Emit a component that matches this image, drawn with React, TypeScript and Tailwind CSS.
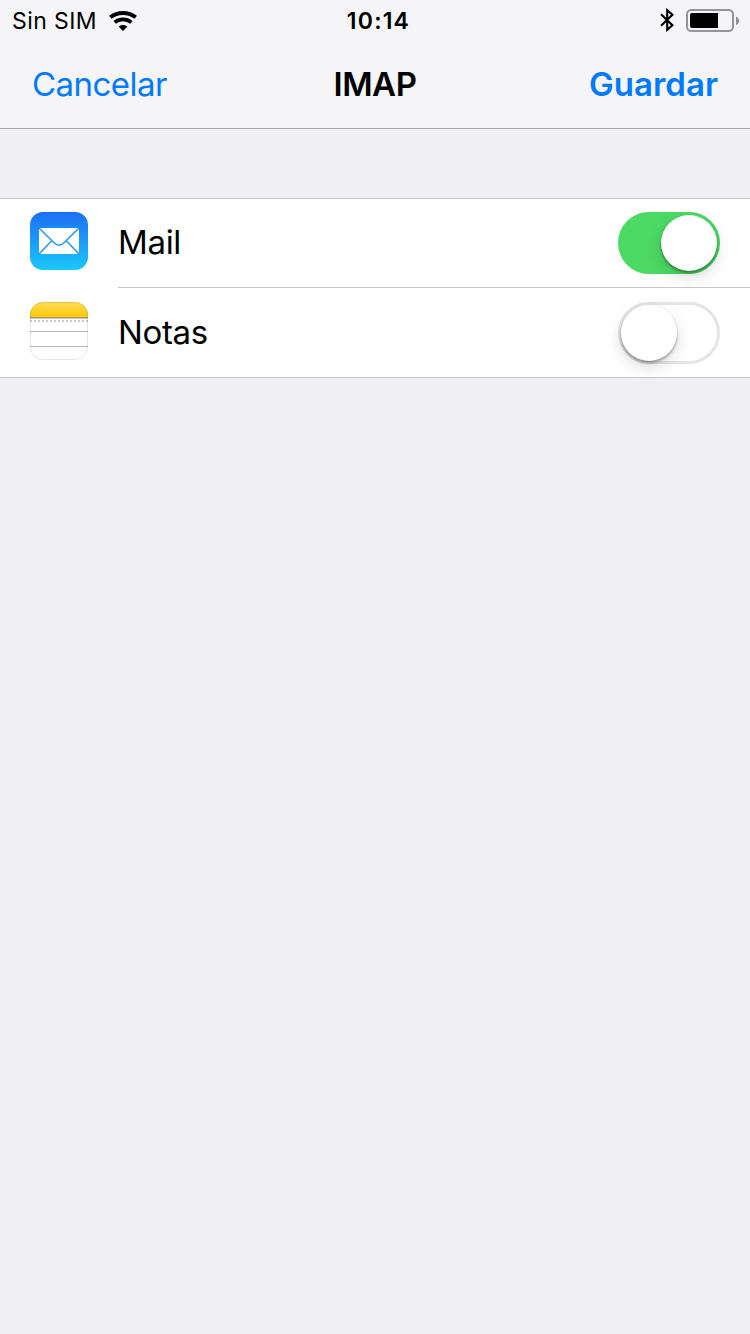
import { useState } from 'react';
import type { ReactNode } from 'react';
import clsx from 'clsx';

const WifiIcon = () => (
  <svg width="28" height="20" viewBox="0 0 28 20" fill="none">
    <path d="M1.300 6.300C8.400 .5 19.600 .5 26.700 6.300" stroke="#000" strokeWidth="3.900" />
    <path d="M5.700 11.300c4.700-4 11.900-4 16.600 0" stroke="#000" strokeWidth="3.700" />
    <path d="M9.600 15.600c2.400-2.200 6.400-2.200 8.800 0L14 20z" fill="#000" />
  </svg>
);

const BluetoothIcon = () => (
  <svg width="14" height="24" viewBox="0 0 14 24" fill="none" className="relative -top-px">
    <path d="M1 6.200l11.400 11L7.200 21.800V2.200l5.200 4.600L1 17.800" stroke="#000" strokeWidth="2.100" />
  </svg>
);

const BatteryIcon = () => (
  <svg width="54" height="24" viewBox="0 0 54 24" fill="none">
    <rect x="1" y="1" width="46" height="21" rx="4.200" stroke="#949496" strokeWidth="2" />
    <path d="M6 4h26v15H6a2 2 0 0 1-2-2V6a2 2 0 0 1 2-2z" fill="#000" />
    <path d="M50 7.500c4 1.500 4 7 0 8.500z" fill="#8e8e90" />
  </svg>
);

const MailIcon = () => (
  <svg width="58" height="58" viewBox="0 0 58 58" fill="none">
    <defs>
      <linearGradient id="mail" x1="0" y1="0" x2="0" y2="1">
        <stop offset="0" stopColor="#1d6ff2" />
        <stop offset="1" stopColor="#1ac8fc" />
      </linearGradient>
    </defs>
    <rect width="58" height="58" rx="13" fill="url(#mail)" />
    <rect x="9" y="16" width="40" height="26" fill="#fff" />
    <path d="M9 16l15.500 15.200c2.500 2.500 6.500 2.500 9 0L49 16M9 42l12.500-13M49 42L36.500 29" stroke="#2397f7" strokeWidth="1.500" />
  </svg>
);

const NotesIcon = () => (
  <svg width="58" height="58" viewBox="0 0 58 58" fill="none">
    <defs>
      <linearGradient id="notes" x1="0" y1="0" x2="0" y2="1">
        <stop offset="0" stopColor="#ffdc5a" />
        <stop offset="1" stopColor="#fdca05" />
      </linearGradient>
      <clipPath id="notesClip">
        <rect width="58" height="58" rx="13" />
      </clipPath>
    </defs>
    <g clipPath="url(#notesClip)">
      <rect width="58" height="58" fill="#fff" />
      <rect width="58" height="15" fill="url(#notes)" />
      <rect y="15" width="58" height="1" fill="#a99a69" />
      <rect y="16" width="58" height="1" fill="#c4c4c8" />
      <path d="M0 19h58" stroke="#c8c8c8" strokeWidth="2" strokeDasharray="2 2" />
      <path d="M0 29.500h58M0 44.500h58" stroke="#b9b9b9" />
    </g>
    <rect x=".5" y=".5" width="57" height="57" rx="12.500" stroke="#000" strokeOpacity=".1" />
  </svg>
);

type SwitchProps = {
  label: string;
  checked: boolean;
  onChange: () => void;
};

const Switch = ({ label, checked, onChange }: SwitchProps) => (
  <button
    role="switch"
    aria-label={label}
    aria-checked={checked}
    onClick={onChange}
    className={clsx(
      'flex h-[62px] w-[102px] items-center rounded-full border-[3px]',
      checked ? 'justify-end border-[#4cd964] bg-[#4cd964]' : 'justify-start border-[#e5e5e5] bg-white'
    )}
  >
    <span className="size-14 rounded-full bg-white shadow-[0_6px_16px_rgba(0,0,0,0.15),0_2px_2px_rgba(0,0,0,0.1),0_2px_3px_rgba(0,0,0,0.25)]" />
  </button>
);

type AccountRowProps = SwitchProps & {
  icon: ReactNode;
  last?: boolean;
};

const AccountRow = ({ icon, last, ...item }: AccountRowProps) => (
  <div className={clsx('flex pl-[30px]', last && 'pt-px')}>
    <div className="mt-[13px] w-[88px]">{icon}</div>
    <div
      className={clsx(
        'flex flex-1 items-start justify-between pt-[13px] pr-[30px]',
        last ? 'h-[88px]' : 'h-[89px] border-b border-[#c8c7cc]'
      )}
    >
      <span className="pt-[10px] text-[33px] leading-[40px] tracking-[-0.35px]">{item.label}</span>
      <Switch {...item} />
    </div>
  </div>
);

const App = () => {
  const [mail, setMail] = useState(true);
  const [notes, setNotes] = useState(false);

  return (
    <div className="min-h-screen bg-[#efeff4] font-['Inter','Liberation_Sans',sans-serif] text-black">
      <header className="h-[129px] border-b border-[#a7a7ab] bg-[#f5f5f7]">
        <div className="grid h-[41px] grid-cols-3 items-center pr-[10px] pl-3 text-[23px]">
          <div className="flex items-center gap-3">
            <span className="pt-0.5 tracking-[0.4px]">Sin SIM</span>
            <WifiIcon />
          </div>
          <span className="pt-0.5 pl-[5px] text-center font-semibold tracking-[1.2px]">10:14</span>
          <div className="flex items-center justify-end gap-3">
            <BluetoothIcon />
            <BatteryIcon />
          </div>
        </div>
        <nav className="grid h-[85px] grid-cols-3 items-center px-8 text-[33px] leading-[40px]">
          <button className="text-left tracking-[-0.55px] text-[#007aff]">Cancelar</button>
          <h1 className="text-center font-semibold tracking-[-0.5px]">IMAP</h1>
          <button className="text-right font-semibold text-[#007aff]">Guardar</button>
        </nav>
      </header>
      <main className="mt-[69px] border-y border-[#c8c7cc] bg-white">
        <AccountRow icon={<MailIcon />} label="Mail" checked={mail} onChange={() => setMail(!mail)} />
        <AccountRow icon={<NotesIcon />} label="Notas" checked={notes} onChange={() => setNotes(!notes)} last />
      </main>
    </div>
  );
};

export default App;
